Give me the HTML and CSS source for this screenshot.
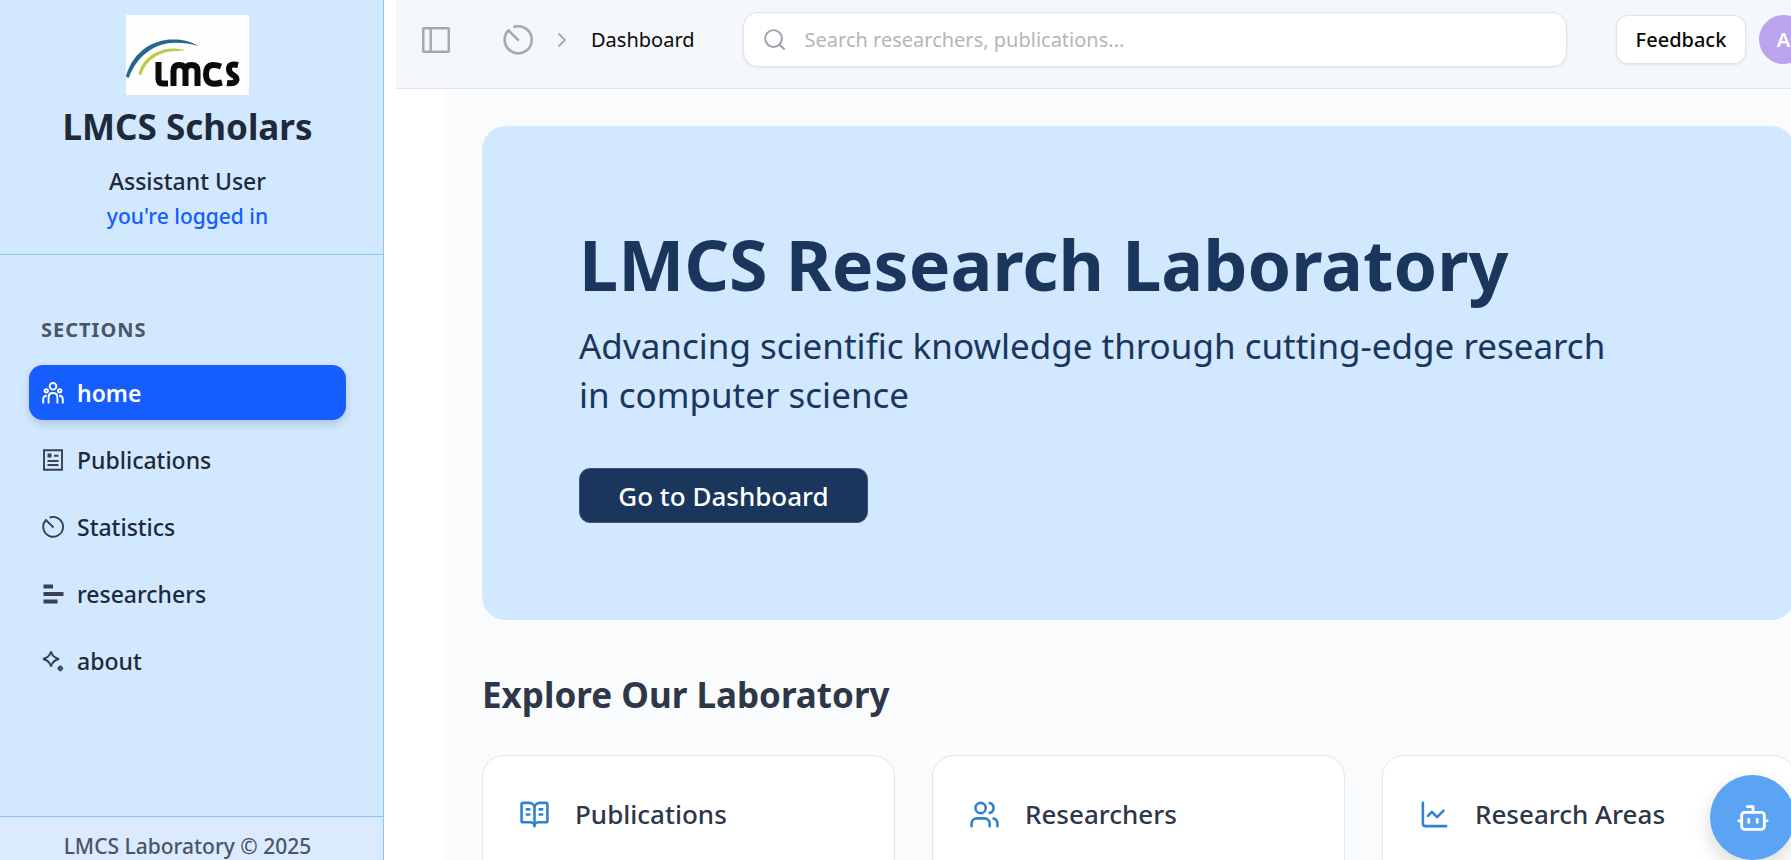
FILE: index.html
```html
<!DOCTYPE html>
<html lang="en">
<head>
<meta charset="utf-8">
<title>LMCS Scholars</title>
<meta name="viewport" content="width=device-width, initial-scale=1">
<link rel="stylesheet" href="styles.css">
</head>
<body>
<div class="app">
  <aside class="sidebar">
    <div class="brand">
      <svg class="brand-logo" viewBox="0 0 123 80" role="img" aria-label="LMCS">
        <rect width="123" height="80" fill="#fefefe"/>
        <path d="M0 61C8 34 30 24 48 24.500C58 24.500 66 27 72 31C64 28.500 56 27.500 48 27.800C32 28 12 38 3 62.500Q1 63.500 0 61Z" fill="#23688f"/>
        <path d="M12.500 59C17 42 32 34 47 33.600Q54 33.500 60 35.600Q54 35.500 47 36.300C35 37 20 44 15.500 60Z" fill="#bccb4b"/>
        <g fill="none" stroke="#0a0a0a" stroke-width="6">
          <path d="M32.500 47V64Q32.500 68.500 37 68.500H42"/>
          <path d="M47.500 71V56Q47.500 50 53 50Q59.500 50 59.500 56V71M59.500 56Q59.500 50 65.500 50Q71.500 50 71.500 56V71"/>
          <path d="M95 51.500Q80 46 80 59.500Q80 72 96 67.500"/>
          <path d="M112 50Q103 48 103 54Q103 58 107 60Q112 63 110 66Q108 69 101 68"/>
        </g>
      </svg>
      <h2 class="brand-title">LMCS Scholars</h2>
      <p class="brand-user">Assistant User</p>
      <p class="brand-status">you're logged in</p>
    </div>
    <nav class="nav" aria-label="Sections">
      <h3 class="nav-heading">SECTIONS</h3>
      <ul class="nav-list">
        <li><a class="nav-link nav-link-active" href="#home" aria-current="page">
          <svg class="nav-icon" viewBox="0 0 22 22" fill="none" stroke="currentColor" stroke-width="1.900"><circle cx="11" cy="4.300" r="3.300"/><circle cx="4.300" cy="8.800" r="1.700"/><circle cx="17.700" cy="8.800" r="1.700"/><path d="M6.600 21.500V15.500Q6.600 11 11 11T15.400 15.500V21.500M1.200 21.500V17.500Q1.200 13.800 4.800 13.700M20.800 21.500V17.500Q20.800 13.800 17.200 13.700"/></svg>
          home</a></li>
        <li><a class="nav-link" href="#publications">
          <svg class="nav-icon" viewBox="0 0 22 22" fill="none" stroke="currentColor" stroke-width="1.900"><path d="M2 1.300H20V20.700H2Z"/><path d="M12 6.700H16.500M5.500 12H16.500M5.500 16H16.500"/><path d="M5.500 4.500H9.500V8.500H5.500Z" fill="currentColor" stroke="none"/></svg>
          Publications</a></li>
        <li><a class="nav-link" href="#statistics">
          <svg class="nav-icon" viewBox="0 0 22 22" fill="none" stroke="currentColor" stroke-width="1.900"><path d="M7.600 1.600A9.900 9.900 0 1 1 4 4L11.500 11.500"/></svg>
          Statistics</a></li>
        <li><a class="nav-link" href="#researchers">
          <svg class="nav-icon" viewBox="0 0 22 22" fill="currentColor"><path d="M1.500 1.500H11V5.500H1.500ZM1.500 9H21.500V13H1.500ZM1.500 16.500H15.500V20.500H1.500Z"/></svg>
          researchers</a></li>
        <li><a class="nav-link" href="#about">
          <svg class="nav-icon" viewBox="0 0 22 22" fill="none" stroke="currentColor" stroke-width="1.900"><path d="M9 1.500Q10.500 7.500 17 9Q10.500 10.500 9 16.500Q7.500 10.500 1 9Q7.500 7.500 9 1.500Z"/><path d="M18.300 15.800Q18.800 17.900 20.900 18.400Q18.800 18.900 18.300 21Q17.800 18.900 15.700 18.400Q17.800 17.900 18.300 15.800Z"/></svg>
          about</a></li>
      </ul>
    </nav>
    <footer class="sidebar-footer">LMCS Laboratory © 2025</footer>
  </aside>

  <div class="page">
    <header class="topbar">
      <button class="icon-button" type="button" aria-label="Toggle sidebar">
        <svg class="toggle-icon" viewBox="0 0 28 26" fill="none" stroke="#a9a9a9" stroke-width="2.500"><rect x="1.250" y="1.250" width="25.500" height="23.500" rx="0.500"/><path d="M8.700 1V25"/></svg>
      </button>
      <nav class="crumbs" aria-label="Breadcrumb">
        <a class="crumb-home" href="#home" aria-label="Home"><svg class="crumb-icon" viewBox="0 0 22 22" fill="none" stroke="#a9a9a9" stroke-width="1.900"><path d="M7.600 1.600A9.900 9.900 0 1 1 4 4L11.500 11.500"/></svg></a>
        <svg class="crumb-chevron" viewBox="0 0 10 16" fill="none" stroke="#a9a9a9" stroke-width="1.800"><path d="M1.500 1.500L8 8L1.500 14.500"/></svg>
        <span class="crumb-current">Dashboard</span>
      </nav>
      <label class="search">
        <svg class="search-icon" viewBox="0 0 22 22" fill="none" stroke="#99a1af" stroke-width="2" stroke-linecap="round"><circle cx="10" cy="10" r="8.800"/><path d="M16.500 16.500L21 21"/></svg>
        <input class="search-input" type="text" aria-label="Search" placeholder="Search researchers, publications...">
      </label>
      <button class="feedback" type="button">Feedback</button>
      <button class="avatar" type="button" aria-label="Account">A</button>
    </header>

    <main class="content">
      <section class="hero">
        <h1 class="hero-title">LMCS Research Laboratory</h1>
        <p class="hero-text">Advancing scientific knowledge through cutting-edge research in computer science</p>
        <button class="hero-button" type="button">Go to Dashboard</button>
      </section>
      <h2 class="section-title">Explore Our Laboratory</h2>
      <div class="cards">
        <article class="card">
          <div class="card-header">
            <svg class="card-icon" viewBox="0 0 24 24"><path d="M12 7v14M16 12h2M16 8h2M6 12h2M6 8h2M3 18a1 1 0 0 1-1-1V4a1 1 0 0 1 1-1h5a4 4 0 0 1 4 4 4 4 0 0 1 4-4h5a1 1 0 0 1 1 1v13a1 1 0 0 1-1 1h-6a3 3 0 0 0-3 3 3 3 0 0 0-3-3z"/></svg>
            <h3 class="card-title">Publications</h3>
          </div>
        </article>
        <article class="card">
          <div class="card-header">
            <svg class="card-icon" viewBox="0 0 24 24"><path d="M16 21v-2a4 4 0 0 0-4-4H6a4 4 0 0 0-4 4v2M22 21v-2a4 4 0 0 0-3-3.870M16 3.130a4 4 0 0 1 0 7.750"/><circle cx="9" cy="7" r="4"/></svg>
            <h3 class="card-title">Researchers</h3>
          </div>
        </article>
        <article class="card">
          <div class="card-header">
            <svg class="card-icon" viewBox="0 0 24 24"><path d="M3 3v16a2 2 0 0 0 2 2h16M19 9l-5 5-4-4-3 3"/></svg>
            <h3 class="card-title">Research Areas</h3>
          </div>
        </article>
      </div>
    </main>
  </div>
  <button class="chat" type="button" aria-label="Open assistant">
    <svg class="chat-icon" viewBox="0 0 24 24"><path d="M12 8V4H8M2 14h2M20 14h2M15 13v2M9 13v2"/><rect x="4" y="8" width="16" height="12" rx="2"/></svg>
  </button>
</div>
</body>
</html>
```
FILE: styles.css
```css
* { box-sizing: border-box; }

body {
  margin: 0;
  background: #fff;
  color: #1e2939;
  font-family: "Noto Sans", "Open Sans", sans-serif;
  font-size: 20px;
}

h1, h2, h3, p, ul { margin: 0; padding: 0; }
ul { list-style: none; }
svg { display: block; flex: none; }
a { color: inherit; text-decoration: none; }
button { font-family: inherit; padding: 0; cursor: pointer; }

.app {
  display: flex;
  gap: 12px;
  height: 100vh;
  overflow: hidden;
}

/* Sidebar */
.sidebar {
  display: flex;
  flex-direction: column;
  flex: 0 0 384px;
  background: #d1e8ff;
  border-right: 1px solid #90c5f0;
}

.brand {
  display: flex;
  flex-direction: column;
  align-items: center;
  padding: 15px 8px 22px 0;
  border-bottom: 1px solid #90c5f0;
}

.brand-logo { width: 123px; height: 80px; }

.brand-title {
  margin: 8px 0 11px;
  font-size: 35px;
  line-height: 48px;
  font-weight: 700;
}

.brand-user { font-size: 23px; line-height: 38px; font-weight: 500; }
.brand-status { font-size: 21px; line-height: 32px; font-weight: 500; color: #155dfc; }

.nav { flex: 1; padding: 60px 37px 0 29px; }

.nav-heading {
  padding: 0 12px;
  margin-bottom: 20px;
  color: #4a5565;
  font-size: 20px;
  line-height: 30px;
  font-weight: 700;
  letter-spacing: 1px;
}

.nav-list { display: grid; gap: 12px; }

.nav-link {
  display: flex;
  align-items: center;
  gap: 13px;
  height: 55px;
  padding: 0 13px;
  border-radius: 14px;
  font-size: 23px;
  font-weight: 500;
}

.nav-link-active {
  background: #155dfc;
  color: #fff;
  font-weight: 600;
  box-shadow: 0 4px 8px rgba(0, 0, 0, 0.15);
}

.nav-icon { width: 22px; height: 22px; color: #364153; }
.nav-link-active .nav-icon { color: #fff; }

.sidebar-footer {
  height: 44px;
  padding: 14px 8px 0 0;
  border-top: 1px solid #90c5f0;
  background: #dbeafe;
  color: #4a5565;
  font-size: 21px;
  line-height: 30px;
  font-weight: 500;
  text-align: center;
}

/* Top bar */
.page { flex: 1; min-width: 0; margin-right: -4px; }

.topbar {
  display: flex;
  align-items: center;
  height: 89px;
  margin-right: -13px;
  padding: 0 0 9px 26px;
  background: #f4f8fc;
  border-bottom: 1px solid #e0e4ea;
}

.icon-button { border: 0; background: none; }
.toggle-icon { width: 28px; height: 26px; }

.crumbs { display: flex; align-items: center; margin-left: 53px; }
.crumb-icon { width: 30px; height: 30px; }
.crumb-chevron { width: 10px; height: 16px; margin: 0 24px; }
.crumb-current { color: #0a0a0a; font-size: 20px; line-height: 30px; }

.search {
  display: flex;
  align-items: center;
  flex: 1;
  height: 55px;
  margin: 0 49px 0 48px;
  padding: 0 20px;
  gap: 20px;
  border: 1px solid #e0e4ea;
  border-radius: 15px;
  background: #fff;
  box-shadow: 0 1px 3px rgba(0, 0, 0, 0.08);
}

.search-icon { width: 21px; height: 21px; }

.search-input {
  flex: 1;
  min-width: 0;
  padding: 0;
  border: 0;
  outline: 0;
  background: none;
  color: #0a0a0a;
  font: inherit;
  font-size: 20px;
}

.search-input::placeholder { color: #b5b5b5; opacity: 1; }

.feedback {
  width: 130px;
  height: 49px;
  border: 1px solid #e0e4ea;
  border-radius: 12px;
  background: #fff;
  color: #0a0a0a;
  font-size: 20px;
  font-weight: 500;
  box-shadow: 0 1px 3px rgba(0, 0, 0, 0.08);
}

.avatar {
  flex: none;
  width: 49px;
  height: 49px;
  margin-left: 13px;
  border: 0;
  border-radius: 50%;
  background: #b8a5ec;
  color: #fff;
  font-size: 20px;
  font-weight: 600;
}

/* Content */
.content {
  margin-left: 49px;
  padding: 37px 0 37px 37px;
  background: #fafbfd;
}

.hero {
  padding: 97px;
  border-radius: 24px;
  background: #d1e8ff;
}

.hero-title {
  color: #1a365d;
  font-size: 70px;
  line-height: 82px;
  font-weight: 700;
}

.hero-text {
  max-width: 1030px;
  margin: 16px 0 49px;
  color: #1a365d;
  font-size: 35px;
  line-height: 49px;
}

.hero-button {
  width: 289px;
  height: 55px;
  border: 1px solid #3d5578;
  border-radius: 11px;
  background: #1a365d;
  color: #fff;
  font-size: 26px;
  font-weight: 500;
}

.section-title {
  margin: 50px 0 35px;
  color: #2d3748;
  font-size: 35px;
  line-height: 50px;
  font-weight: 700;
}

.cards {
  display: grid;
  grid-template-columns: repeat(3, 1fr);
  gap: 37px;
}

.card {
  min-height: 240px;
  padding: 40px 36px;
  border: 1px solid #e2e8f0;
  border-radius: 22px;
  background: #fff;
}

.card-header { display: flex; align-items: center; gap: 25px; }

.card-icon,
.chat-icon {
  width: 31px;
  height: 31px;
  fill: none;
  stroke: #3182ce;
  stroke-width: 2;
  stroke-linecap: round;
  stroke-linejoin: round;
}

.card-title {
  color: #2d3748;
  font-size: 26px;
  line-height: 36px;
  font-weight: 500;
}

.chat {
  position: fixed;
  right: -4px;
  bottom: 0;
  display: grid;
  place-items: center;
  width: 85px;
  height: 85px;
  border: 0;
  border-radius: 50%;
  background: #5ba4f4;
  box-shadow: 0 8px 20px rgba(0, 0, 0, 0.15);
}

.chat-icon { width: 34px; height: 34px; stroke: #fff; }
```
